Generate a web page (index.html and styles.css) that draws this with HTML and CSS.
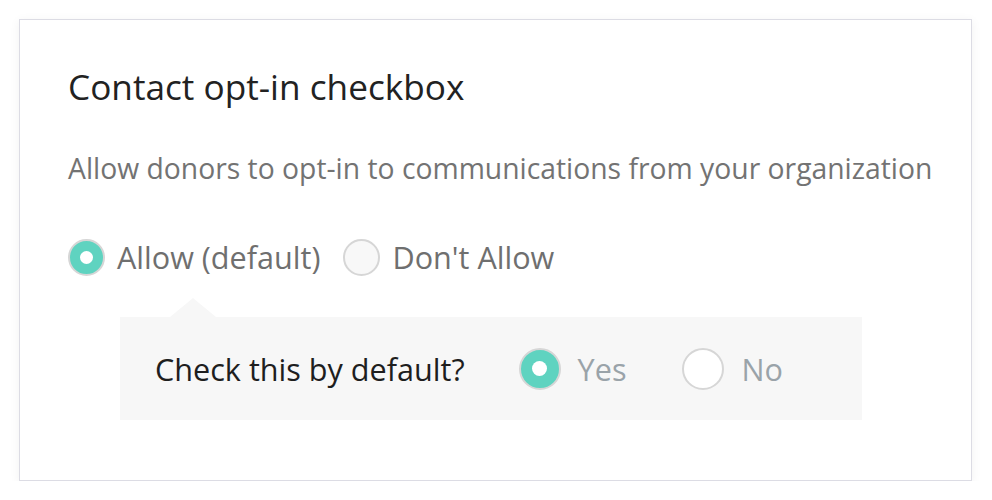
FILE: index.html
```html
<!DOCTYPE html>
<html lang="en">
<head>
  <meta charset="UTF-8">
  <title>Contact opt-in checkbox</title>
  <link rel="stylesheet" href="styles.css">
</head>
<body>
  <div class="card">
    <h2 class="card-title">Contact opt-in checkbox</h2>
    <p class="card-desc">Allow donors to opt-in to communications from your organization</p>
    <div class="radio-row">
      <label class="radio-option">
        <span class="radio radio-checked"></span>
        <span class="radio-label">Allow (default)</span>
      </label>
      <label class="radio-option">
        <span class="radio radio-muted"></span>
        <span class="radio-label">Don't Allow</span>
      </label>
    </div>
    <div class="subpanel">
      <span class="subpanel-question">Check this by default?</span>
      <label class="radio-option sub-option">
        <span class="radio radio-lg radio-checked"></span>
        <span class="radio-label sub-label">Yes</span>
      </label>
      <label class="radio-option sub-option">
        <span class="radio radio-lg"></span>
        <span class="radio-label sub-label">No</span>
      </label>
    </div>
  </div>
</body>
</html>
```

FILE: styles.css
```css
body {
  margin: 0;
  padding: 19px 20px 0 19px;
  background-color: #ffffff;
  font-family: "Open Sans", Arial, sans-serif;
}

.card {
  height: 462px;
  box-sizing: border-box;
  padding: 42px 0 0 48px;
  border: 1px solid #dcdce4;
  background-color: #ffffff;
  box-shadow: 0 2px 10px rgba(0, 0, 0, 0.06);
}

.card-title {
  margin: 0;
  font-size: 35.2px;
  font-weight: 400;
  line-height: 48px;
  color: #222222;
}

.card-desc {
  margin: 39px 0 0 0;
  font-size: 28.3px;
  line-height: 38px;
  color: #737373;
}

.radio-row {
  display: flex;
  align-items: center;
  gap: 23px;
  margin-top: 51px;
}

.radio-option {
  display: flex;
  align-items: center;
  gap: 12px;
}

.radio {
  position: relative;
  width: 37px;
  height: 37px;
  box-sizing: border-box;
  border: 2px solid #d6d6d6;
  border-radius: 50%;
  background-color: #ffffff;
}

.radio-muted {
  background-color: #f8f8f8;
}

.radio-checked {
  background-color: #5fd3c0;
}

.radio-checked::after {
  content: "";
  position: absolute;
  top: 50%;
  left: 50%;
  width: 13px;
  height: 13px;
  margin: -6.5px 0 0 -6.5px;
  border-radius: 50%;
  background-color: #ffffff;
}

.radio-lg {
  width: 42px;
  height: 42px;
}

.radio-lg.radio-checked::after {
  width: 15px;
  height: 15px;
  margin: -7.5px 0 0 -7.5px;
}

.radio-label {
  font-size: 30.6px;
  line-height: 38px;
  color: #6f6f6f;
}

.subpanel {
  position: relative;
  display: flex;
  align-items: center;
  width: 742px;
  height: 103px;
  box-sizing: border-box;
  margin: 41px 0 0 52px;
  padding-left: 35px;
  background-color: #f7f7f7;
}

.subpanel::before {
  content: "";
  position: absolute;
  top: -19px;
  left: 50px;
  width: 46px;
  height: 19px;
  background-color: #f7f7f7;
  clip-path: polygon(50% 0, 100% 100%, 0 100%);
}

.subpanel-question {
  font-size: 30.6px;
  color: #1e1e1e;
  margin-right: 54px;
}

.sub-option {
  margin-right: 56px;
  gap: 17px;
}

.sub-label {
  color: #9aa3a9;
}
```
